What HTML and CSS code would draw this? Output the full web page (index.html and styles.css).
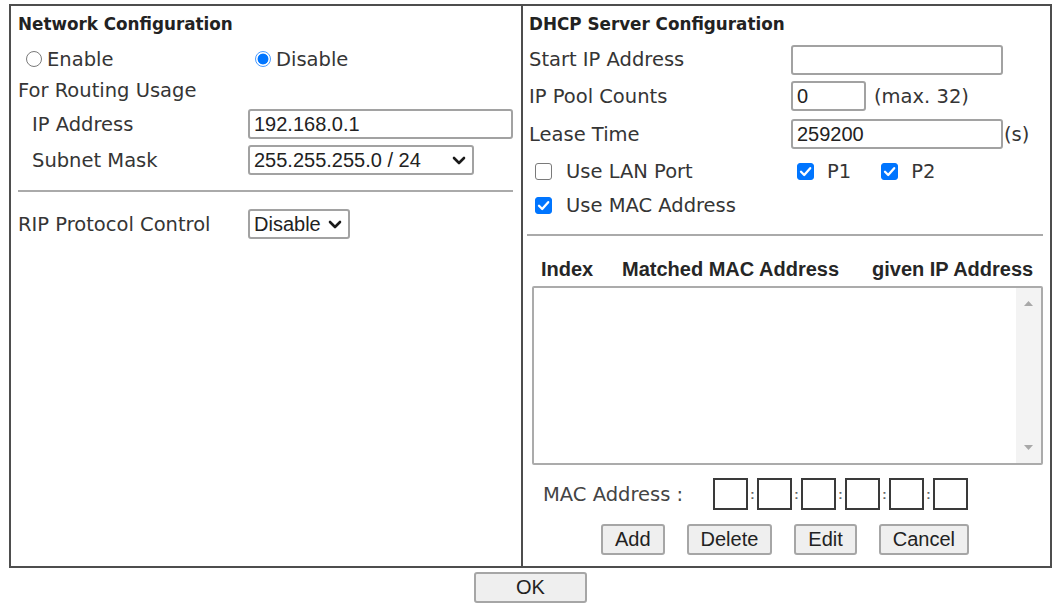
FILE: index.html
```html
<!DOCTYPE html>
<html lang="en">
<head>
<meta charset="utf-8">
<title>LAN General Setup</title>
<link rel="stylesheet" href="styles.css">
</head>
<body>
<div class="page">
  <div class="frame">
    <section class="panel panel-left">
      <div class="title">Network Configuration</div>
      <div class="row row-radio">
        <label class="opt opt-enable"><input type="radio" name="net" class="radio"><span>Enable</span></label>
        <label class="opt opt-disable"><input type="radio" name="net" class="radio" checked><span>Disable</span></label>
      </div>
      <div class="row row-routing"><span class="label">For Routing Usage</span></div>
      <div class="row row-ip">
        <span class="label indent">IP Address</span>
        <input class="field field-wide" type="text" value="192.168.0.1">
      </div>
      <div class="row row-subnet">
        <span class="label indent">Subnet Mask</span>
        <div class="select select-subnet">
          <select class="select-native">
            <option selected>255.255.255.0 / 24</option>
            <option>255.255.0.0 / 16</option>
          </select>
          <svg class="chevron" width="14" height="9" viewBox="0 0 14 9"><path d="M2 2 L7 7 L12 2" fill="none" stroke="#1a1a1a" stroke-width="2.6" stroke-linecap="round" stroke-linejoin="round"/></svg>
        </div>
      </div>
      <div class="sep sep-left"></div>
      <div class="row row-rip">
        <span class="label">RIP Protocol Control</span>
        <div class="select select-rip">
          <select class="select-native">
            <option selected>Disable</option>
            <option>Enable</option>
          </select>
          <svg class="chevron" width="14" height="9" viewBox="0 0 14 9"><path d="M2 2 L7 7 L12 2" fill="none" stroke="#1a1a1a" stroke-width="2.6" stroke-linecap="round" stroke-linejoin="round"/></svg>
        </div>
      </div>
    </section>

    <section class="panel panel-right">
      <div class="title title-right">DHCP Server Configuration</div>
      <div class="row2 row-start">
        <span class="label">Start IP Address</span>
        <input class="field field-start" type="text" value="">
      </div>
      <div class="row2 row-pool">
        <span class="label">IP Pool Counts</span>
        <span class="value"><input class="field field-pool" type="text" value="0"><span class="hint">(max. 32)</span></span>
      </div>
      <div class="row2 row-lease">
        <span class="label">Lease Time</span>
        <span class="value"><input class="field field-start" type="text" value="259200"><span class="unit">(s)</span></span>
      </div>
      <div class="row2 row-lan">
        <label class="chk-label">
          <span class="cbox"><input type="checkbox" class="chk"></span>
          <span>Use LAN Port</span>
        </label>
        <span class="value ports">
          <label class="port port-1">
            <span class="cbox"><input type="checkbox" class="chk" checked><svg class="tick" width="17" height="17" viewBox="0 0 17 17"><path d="M4 8.8 L7.2 12 L13.2 5.2" fill="none" stroke="#ffffff" stroke-width="2.3" stroke-linecap="round" stroke-linejoin="round"/></svg></span>
            <span>P1</span>
          </label>
          <label class="port port-2">
            <span class="cbox"><input type="checkbox" class="chk" checked><svg class="tick" width="17" height="17" viewBox="0 0 17 17"><path d="M4 8.8 L7.2 12 L13.2 5.2" fill="none" stroke="#ffffff" stroke-width="2.3" stroke-linecap="round" stroke-linejoin="round"/></svg></span>
            <span>P2</span>
          </label>
        </span>
      </div>
      <div class="row2 row-mac">
        <label class="chk-label">
          <span class="cbox"><input type="checkbox" class="chk" checked><svg class="tick" width="17" height="17" viewBox="0 0 17 17"><path d="M4 8.8 L7.2 12 L13.2 5.2" fill="none" stroke="#ffffff" stroke-width="2.3" stroke-linecap="round" stroke-linejoin="round"/></svg></span>
          <span>Use MAC Address</span>
        </label>
      </div>
      <div class="sep sep-right"></div>
      <div class="list-head">
        <span>Index</span>
        <span>Matched MAC Address</span>
        <span>given IP Address</span>
      </div>
      <div class="listbox" role="listbox">
        <div class="list-body"></div>
        <div class="scrollbar">
          <svg width="9" height="5" viewBox="0 0 9 5"><path d="M0 5 L4.5 0 L9 5 Z" fill="#a8a8a8"/></svg>
          <svg width="9" height="5" viewBox="0 0 9 5"><path d="M0 0 L4.5 5 L9 0 Z" fill="#a8a8a8"/></svg>
        </div>
      </div>
      <div class="mac-row">
        <span class="mac-label">MAC Address :</span>
        <span class="mac-boxes">
          <input class="mac-box" type="text"><span class="colon">:</span>
          <input class="mac-box" type="text"><span class="colon">:</span>
          <input class="mac-box" type="text"><span class="colon">:</span>
          <input class="mac-box" type="text"><span class="colon">:</span>
          <input class="mac-box" type="text"><span class="colon">:</span>
          <input class="mac-box" type="text">
        </span>
      </div>
      <div class="btn-row">
        <button class="btn btn-add">Add</button>
        <button class="btn btn-delete">Delete</button>
        <button class="btn btn-edit">Edit</button>
        <button class="btn btn-cancel">Cancel</button>
      </div>
    </section>
  </div>
  <div class="actions">
    <button class="btn btn-ok">OK</button>
  </div>
</div>
</body>
</html>
```

FILE: styles.css
```css
html, body {
  margin: 0;
  padding: 0;
  background: #ffffff;
}

body {
  font-family: "DejaVu Sans", Verdana, sans-serif;
  font-size: 19.5px;
  color: #353535;
}

.page {
  padding: 4px 0 0 9px;
}

.frame {
  box-sizing: border-box;
  width: 1043px;
  height: 564px;
  border: 2px solid #4e4e4e;
  display: grid;
  grid-template-columns: 510px 1fr;
}

.panel {
  display: flex;
  flex-direction: column;
  min-width: 0;
}

.panel-left {
  padding: 0 8px 0 7px;
}

.panel-right {
  border-left: 2px solid #4e4e4e;
  padding: 0 7px 0 4px;
}

.title {
  height: 36px;
  display: flex;
  align-items: center;
  font-weight: bold;
  font-size: 16.8px;
  color: #222222;
}

.title-right {
  padding-left: 2px;
}

.label {
  white-space: nowrap;
}

.indent {
  padding-left: 14px;
}

/* left rows */
.row {
  display: grid;
  grid-template-columns: 230px 1fr;
  align-items: center;
}

.row-radio { height: 34px; }
.row-routing { height: 28px; }
.row-ip { height: 40px; }
.row-subnet { height: 32px; }
.row-rip { height: 36px; }

.opt {
  display: flex;
  align-items: center;
  gap: 5px;
}

.opt-enable { padding-left: 8px; }
.opt-disable { padding-left: 7px; }

.radio {
  appearance: none;
  -webkit-appearance: none;
  box-sizing: border-box;
  width: 16px;
  height: 16px;
  margin: 0;
  border: 1.5px solid #7a7a7a;
  border-radius: 50%;
  background: #ffffff;
}

.radio:checked {
  border-color: #4a9bff;
  background: radial-gradient(circle at center, #0075ff 0, #0075ff 5px, #ffffff 5.8px);
}

.field {
  box-sizing: border-box;
  height: 30px;
  border: 2px solid #a2a2a2;
  border-radius: 3px;
  padding: 0 4px;
  font-family: "Liberation Sans", Arial, sans-serif;
  font-size: 20px;
  color: #222222;
  background: #ffffff;
  margin: 0;
}

.field-wide { width: 265px; }

.select {
  box-sizing: border-box;
  height: 30px;
  border: 2px solid #a2a2a2;
  border-radius: 3px;
  display: flex;
  align-items: center;
  background: #ffffff;
}

.select-subnet { width: 226px; }
.select-rip { width: 102px; }

.select-native {
  appearance: none;
  -webkit-appearance: none;
  border: none;
  outline: none;
  background: transparent;
  flex: 1;
  min-width: 0;
  height: 100%;
  padding: 0 0 0 4px;
  margin: 0;
  font-family: "Liberation Sans", Arial, sans-serif;
  font-size: 20px;
  color: #222222;
}

.chevron {
  flex: none;
  margin-right: 6px;
}

.sep {
  border-top: 2px solid #aaaaaa;
}

.sep-left {
  margin: 14px 0;
}

.sep-right {
  margin: 12px 0 16px 0;
}

/* right rows */
.row2 {
  display: grid;
  grid-template-columns: 264px 1fr;
  align-items: center;
}

.row2 > .label {
  padding-left: 2px;
}

.row-start { height: 35px; }
.row-pool { height: 38px; }
.row-lease { height: 38px; }
.row-lan { height: 36px; }
.row-mac { height: 33px; }

.value {
  display: flex;
  align-items: center;
}

.field-start { width: 212px; }
.field-pool { width: 75px; }

.hint {
  margin-left: 8px;
}

.unit {
  margin-left: 1px;
}

.chk-label {
  display: flex;
  align-items: center;
  gap: 14px;
  padding-left: 8px;
}

.cbox {
  display: grid;
  width: 17px;
  height: 17px;
}

.cbox > * {
  grid-area: 1 / 1;
}

.chk {
  appearance: none;
  -webkit-appearance: none;
  box-sizing: border-box;
  width: 17px;
  height: 17px;
  margin: 0;
  border: 1.5px solid #7a7a7a;
  border-radius: 3px;
  background: #ffffff;
}

.chk:checked {
  border-color: #0075ff;
  background: #0075ff;
}

.tick {
  pointer-events: none;
}

.ports {
  padding-left: 6px;
}

.port {
  display: flex;
  align-items: center;
  gap: 13px;
}

.port-2 {
  margin-left: 30px;
}

.list-head {
  height: 34px;
  display: grid;
  grid-template-columns: 81px 250px auto;
  align-items: center;
  padding-left: 14px;
  font-family: "Liberation Sans", Arial, sans-serif;
  font-weight: bold;
  font-size: 20px;
  color: #262626;
  white-space: nowrap;
}

.listbox {
  box-sizing: border-box;
  height: 179px;
  margin-left: 5px;
  border: 2px solid #ababab;
  border-radius: 2px;
  display: flex;
  background: #ffffff;
}

.list-body {
  flex: 1;
}

.scrollbar {
  width: 25px;
  background: #f3f3f3;
  display: flex;
  flex-direction: column;
  align-items: center;
  justify-content: space-between;
  padding: 13px 0 13px 0;
}

.mac-row {
  margin-top: 13px;
  height: 32px;
  display: flex;
  align-items: center;
  padding-left: 16px;
}

.mac-label {
  color: #444444;
  width: 170px;
  white-space: nowrap;
}

.mac-boxes {
  display: flex;
  align-items: center;
}

.mac-box {
  box-sizing: border-box;
  width: 35px;
  height: 32px;
  border: 2px solid #3a3a3a;
  border-radius: 0;
  margin: 0;
  padding: 0;
  background: #ffffff;
}

.colon {
  width: 9px;
  text-align: center;
  font-family: "Liberation Sans", Arial, sans-serif;
  font-size: 13px;
  font-weight: bold;
  color: #666666;
}

.btn-row {
  margin-top: 14px;
  display: flex;
  justify-content: center;
  gap: 22px;
}

.btn {
  box-sizing: border-box;
  height: 31px;
  padding: 0 12px;
  border: 2px solid #a6a6a6;
  border-radius: 3px;
  background: #efefef;
  font-family: "Liberation Sans", Arial, sans-serif;
  font-size: 20px;
  color: #222222;
  margin: 0;
}

.actions {
  width: 1043px;
  display: flex;
  justify-content: center;
  padding-top: 4px;
}

.btn-ok {
  width: 113px;
}
```
